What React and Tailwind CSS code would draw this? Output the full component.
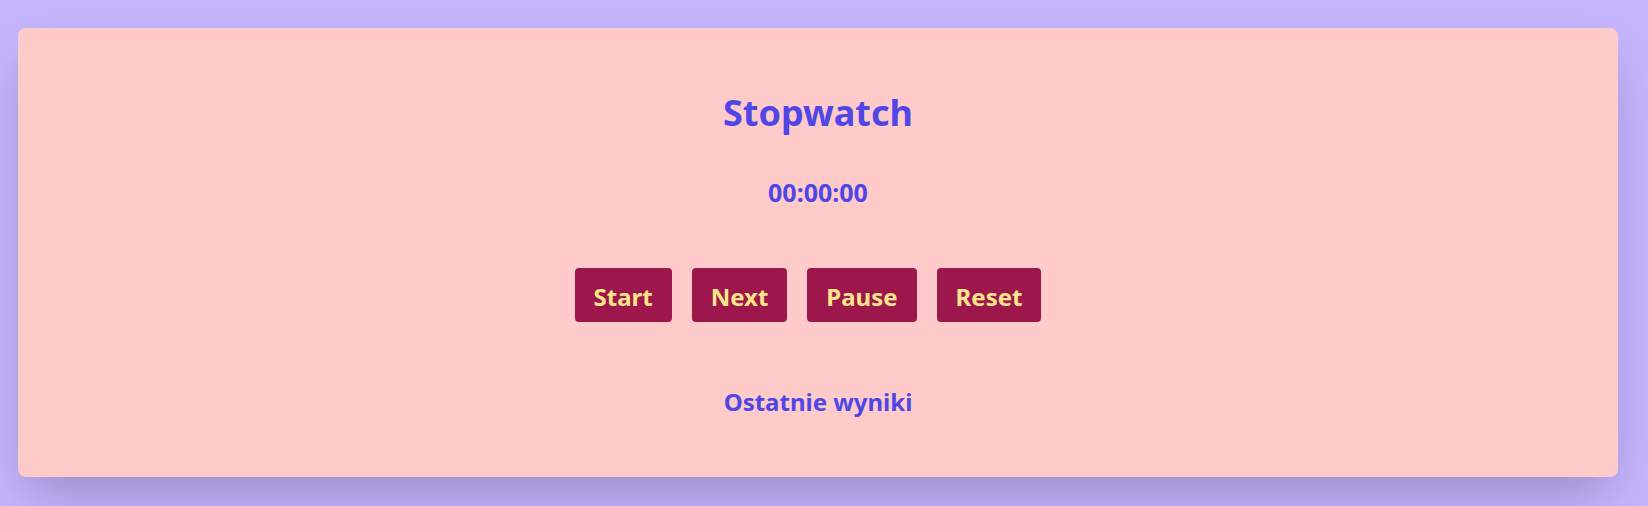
const buttons = ['Start', 'Next', 'Pause', 'Reset'];

const App = () => {
    return (
        <div
            className="min-h-screen bg-[#c4b5fd] pt-[28px] pl-[18px] pr-[30px] pb-[29px]"
            style={{ fontFamily: '"Noto Sans", "Open Sans", sans-serif' }}
        >
            <div className="bg-[#fecaca] rounded-lg shadow-2xl h-[449px] pt-[65px] text-center text-[#4f46e5]">
                <h1 className="text-[36px] leading-[40px] font-bold">Stopwatch</h1>

                <div className="mt-[43px] text-[25px] leading-8 font-bold">00:00:00</div>

                <div className="mt-[60px]">
                    {buttons.map(label => (
                        <button
                            key={label}
                            className="inline-block mr-5 px-[19px] pt-1 h-[54px] rounded bg-[#9d174d] text-[#fde68a] text-2xl font-bold"
                        >
                            {label}
                        </button>
                    ))}
                </div>

                <h2 className="mt-[64px] text-2xl leading-8 font-bold">Ostatnie wyniki</h2>
            </div>
        </div>
    );
};

export default App;
